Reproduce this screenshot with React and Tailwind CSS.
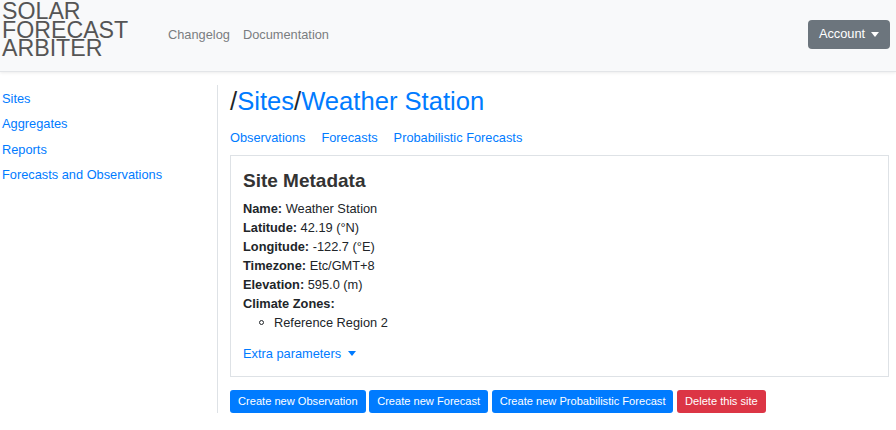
import React from 'react';

const font = { fontFamily: '"Liberation Sans", Arial, sans-serif' };

const sideLinks = ['Sites', 'Aggregates', 'Reports', 'Forecasts and Observations'];

const meta = [
  ['Name:', 'Weather Station'],
  ['Latitude:', '42.19 (°N)'],
  ['Longitude:', '-122.7 (°E)'],
  ['Timezone:', 'Etc/GMT+8'],
  ['Elevation:', '595.0 (m)'],
];

const Caret = ({ className = '' }) => (
  <span
    className={`inline-block w-0 h-0 border-l-[4px] border-r-[4px] border-t-[5px] border-l-transparent border-r-transparent align-middle ${className}`}
  />
);

const App = () => {
  return (
    <div className="w-[896px] h-[430px] bg-white text-[#212529] overflow-hidden font-['Liberation_Sans',Arial,sans-serif]" style={font}>
      <header className="h-[72px] bg-[#f8f9fa] border-b border-[#e3e5e8] shadow-[0_1px_3px_rgba(0,0,0,0.08)] flex items-center justify-between pr-[6px]">
        <div className="flex items-center h-full">
          <div className="w-[168px] pl-[2px] self-start pt-[2px] text-[23.2px] leading-[18.5px] text-[#555] uppercase">
            <div>Solar</div>
            <div>Forecast</div>
            <div>Arbiter</div>
          </div>
          <nav className="flex gap-[13px] text-[12.8px] text-[#7a7d80] mt-[-2px]">
            <a>Changelog</a>
            <a>Documentation</a>
          </nav>
        </div>
        <button className="h-[29px] w-[82px] mt-[-3px] rounded-[4px] bg-[#6c757d] text-white text-[12.8px] flex items-center justify-center gap-[6px]">
          Account
          <Caret className="border-t-white" />
        </button>
      </header>

      <div className="flex">
        <aside className="w-[217px] pt-[14px] pl-[2px] flex flex-col text-[12.8px] text-[#007bff]">
          {sideLinks.map((l) => (
            <a key={l} className="leading-[25.3px]">{l}</a>
          ))}
        </aside>
        <main className="flex-1 mt-[13px] border-l border-[#dee2e6] pl-[12px] pr-[7px] h-[328px]">
          <h1 className="text-[25.6px] leading-[30px] mt-[1px] text-[#212529]">
            /<a className="text-[#007bff]">Sites</a>/<a className="text-[#007bff]">Weather Station</a>
          </h1>
          <div className="flex gap-[16px] text-[12.8px] text-[#007bff] mt-[13px] leading-[17px]">
            <a>Observations</a>
            <a>Forecasts</a>
            <a>Probabilistic Forecasts</a>
          </div>
          <section className="mt-[9px] border border-[#dee2e6] px-[12px] pt-[13px] pb-[13px] h-[222px]">
            <h2 className="text-[19px] font-bold leading-[24px] text-[#333]">Site Metadata</h2>
            <div className="mt-[6px] text-[12.8px] leading-[19px]">
              {meta.map(([k, v]) => (
                <div key={k}>
                  <b>{k}</b> {v}
                </div>
              ))}
              <div><b>Climate Zones:</b></div>
              <ul className="pl-[16px]">
                <li className="flex items-center gap-[10px]">
                  <span className="w-[5px] h-[5px] rounded-full border border-[#212529]" />
                  Reference Region 2
                </li>
              </ul>
            </div>
            <a className="mt-[12px] flex items-center gap-[7px] text-[12.8px] text-[#007bff] leading-[19px]">
              Extra parameters
              <Caret className="border-t-[#007bff]" />
            </a>
          </section>
          <div className="flex gap-[3.5px] mt-[13px] text-[11.1px] text-white">
            <button className="h-[23px] px-[8px] rounded-[3px] bg-[#007bff]">Create new Observation</button>
            <button className="h-[23px] px-[8px] rounded-[3px] bg-[#007bff]">Create new Forecast</button>
            <button className="h-[23px] px-[8px] rounded-[3px] bg-[#007bff]">Create new Probabilistic Forecast</button>
            <button className="h-[23px] px-[8px] rounded-[3px] bg-[#dc3545]">Delete this site</button>
          </div>
        </main>
      </div>
    </div>
  );
};

export default App;
